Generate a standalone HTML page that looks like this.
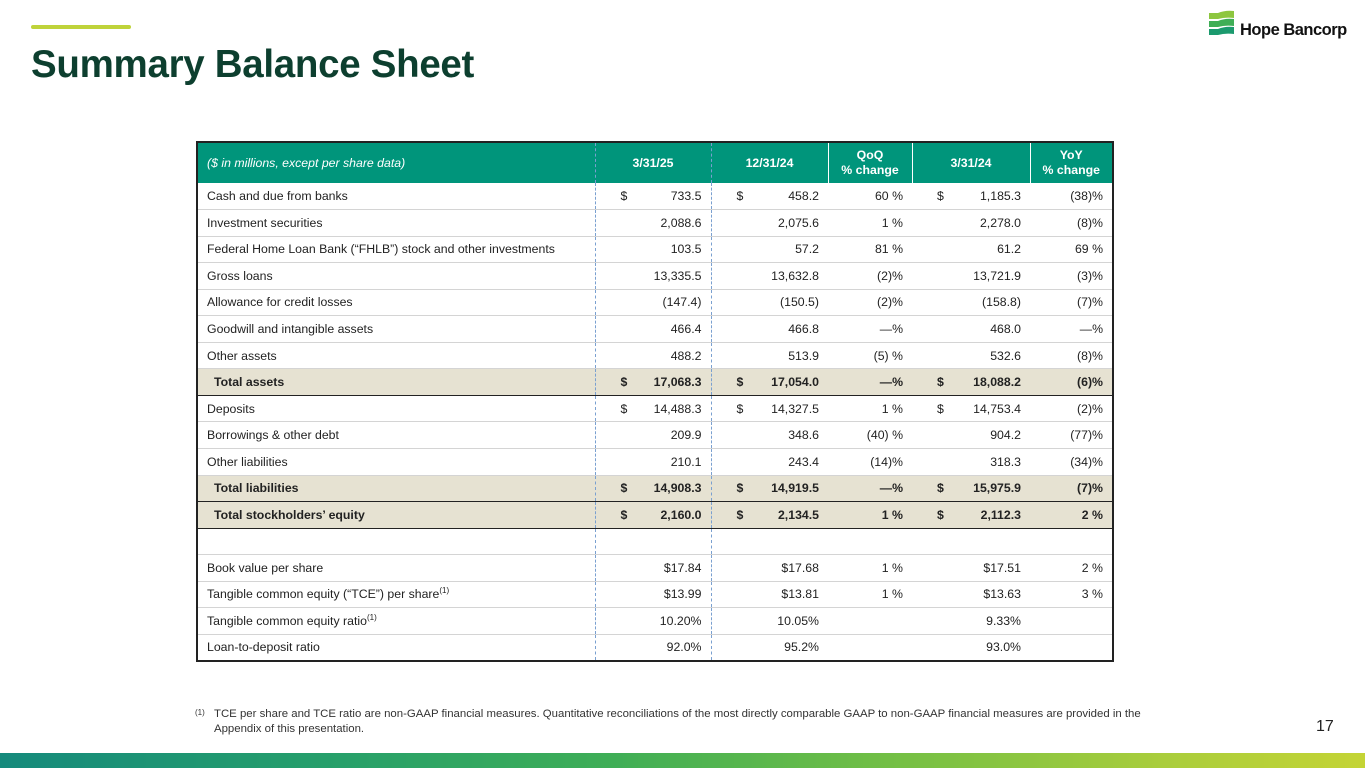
<!DOCTYPE html>
<html><head><meta charset="utf-8"><style>
*{margin:0;padding:0;box-sizing:border-box}
body{width:1365px;height:768px;background:#fff;position:relative;overflow:hidden;font-family:"Liberation Sans",sans-serif}
.bar{position:absolute;left:31px;top:25px;width:100px;height:4px;background:#bfd33a;border-radius:2px}
h1{position:absolute;left:31px;top:43px;font-size:38.5px;font-weight:bold;color:#0d3f2f;letter-spacing:-0.3px}
.logo{position:absolute;left:1207px;top:9px}
.logotxt{position:absolute;left:1240px;top:21px;font-size:16.5px;font-weight:bold;color:#111;letter-spacing:-0.5px}
table{position:absolute;left:196px;top:141px;border-collapse:collapse;font-size:12.3px;color:#222;border:2px solid #222;table-layout:fixed}
td,th{height:26.55px;padding:0 9px;white-space:nowrap;border-bottom:1px solid #d4d4d4}
th{height:41px;background:#00957b;color:#fff;font-weight:bold;text-align:center;line-height:15px;border-bottom:none}
th.l{text-align:left;font-style:italic;font-weight:normal}
th+th{border-left:1px solid #fff}
th.d1,th.d2{border-left:1px dashed #7aa0d0}
td.d{border-left:1px dashed #7aa0d0}
td.n{text-align:right}
td.n span{float:left;margin-left:16px}
tr.t td{background:#e6e2d2;font-weight:bold;border-top:1.5px solid #222;border-bottom:1.5px solid #222}
tr.t td:first-child{padding-left:16px}
sup{font-size:8px;vertical-align:top;line-height:8px}
.fn{position:absolute;left:195px;top:707px;font-size:11.4px;color:#333;line-height:15px}
.fn .s{position:absolute;left:0;top:-2px;font-size:8px}
.fn p{margin-left:19px}
.pg{position:absolute;left:1316px;top:718px;font-size:16px;color:#222}
.btm{position:absolute;left:0;top:753px;width:1365px;height:15px;background:linear-gradient(90deg,#158a7c 0%,#27a06a 25%,#3fae56 45%,#72bf45 65%,#a9cd3c 85%,#c4d435 100%)}
</style></head><body>
<div class="bar"></div>
<h1>Summary Balance Sheet</h1>
<svg class="logo" width="30" height="30" viewBox="0 0 30 30">
<path d="M2 4 L11 4 Q18 1 27 2 L27 9 Q18 8 11 10 L2 10Z" fill="#8dc63f"/>
<path d="M2 12 L11 12 Q18 9 27 10 L27 17 Q18 16 11 18 L2 18Z" fill="#3fae56"/>
<path d="M2 20 L11 20 Q18 17 27 18 L27 25 Q18 24 11 26 L2 26Z" fill="#1b9a6e"/>
</svg>
<div class="logotxt">Hope Bancorp</div>
<table>
<colgroup><col style="width:398px"><col style="width:116px"><col style="width:117px"><col style="width:84px"><col style="width:118px"><col style="width:83px"></colgroup>
<tr><th class="l">($ in millions, except per share data)</th><th class="d1">3/31/25</th><th class="d2">12/31/24</th><th>QoQ<br>% change</th><th>3/31/24</th><th>YoY<br>% change</th></tr>
<tr><td>Cash and due from banks</td><td class="n d"><span>$</span>733.5</td><td class="n d"><span>$</span>458.2</td><td class="n">60 %</td><td class="n"><span>$</span>1,185.3</td><td class="n">(38)%</td></tr>
<tr><td>Investment securities</td><td class="n d">2,088.6</td><td class="n d">2,075.6</td><td class="n">1 %</td><td class="n">2,278.0</td><td class="n">(8)%</td></tr>
<tr><td>Federal Home Loan Bank (“FHLB”) stock and other investments</td><td class="n d">103.5</td><td class="n d">57.2</td><td class="n">81 %</td><td class="n">61.2</td><td class="n">69 %</td></tr>
<tr><td>Gross loans</td><td class="n d">13,335.5</td><td class="n d">13,632.8</td><td class="n">(2)%</td><td class="n">13,721.9</td><td class="n">(3)%</td></tr>
<tr><td>Allowance for credit losses</td><td class="n d">(147.4)</td><td class="n d">(150.5)</td><td class="n">(2)%</td><td class="n">(158.8)</td><td class="n">(7)%</td></tr>
<tr><td>Goodwill and intangible assets</td><td class="n d">466.4</td><td class="n d">466.8</td><td class="n">—%</td><td class="n">468.0</td><td class="n">—%</td></tr>
<tr><td>Other assets</td><td class="n d">488.2</td><td class="n d">513.9</td><td class="n">(5) %</td><td class="n">532.6</td><td class="n">(8)%</td></tr>
<tr class="t"><td>Total assets</td><td class="n d"><span>$</span>17,068.3</td><td class="n d"><span>$</span>17,054.0</td><td class="n">—%</td><td class="n"><span>$</span>18,088.2</td><td class="n">(6)%</td></tr>
<tr><td>Deposits</td><td class="n d"><span>$</span>14,488.3</td><td class="n d"><span>$</span>14,327.5</td><td class="n">1 %</td><td class="n"><span>$</span>14,753.4</td><td class="n">(2)%</td></tr>
<tr><td>Borrowings &amp; other debt</td><td class="n d">209.9</td><td class="n d">348.6</td><td class="n">(40) %</td><td class="n">904.2</td><td class="n">(77)%</td></tr>
<tr><td>Other liabilities</td><td class="n d">210.1</td><td class="n d">243.4</td><td class="n">(14)%</td><td class="n">318.3</td><td class="n">(34)%</td></tr>
<tr class="t"><td>Total liabilities</td><td class="n d"><span>$</span>14,908.3</td><td class="n d"><span>$</span>14,919.5</td><td class="n">—%</td><td class="n"><span>$</span>15,975.9</td><td class="n">(7)%</td></tr>
<tr class="t"><td>Total stockholders’ equity</td><td class="n d"><span>$</span>2,160.0</td><td class="n d"><span>$</span>2,134.5</td><td class="n">1 %</td><td class="n"><span>$</span>2,112.3</td><td class="n">2 %</td></tr>
<tr><td></td><td class="d"></td><td class="d"></td><td></td><td></td><td></td></tr>
<tr><td>Book value per share</td><td class="n d">$17.84</td><td class="n d">$17.68</td><td class="n">1 %</td><td class="n">$17.51</td><td class="n">2 %</td></tr>
<tr><td>Tangible common equity (“TCE”) per share<sup>(1)</sup></td><td class="n d">$13.99</td><td class="n d">$13.81</td><td class="n">1 %</td><td class="n">$13.63</td><td class="n">3 %</td></tr>
<tr><td>Tangible common equity ratio<sup>(1)</sup></td><td class="n d">10.20%</td><td class="n d">10.05%</td><td class="n"></td><td class="n">9.33%</td><td class="n"></td></tr>
<tr><td>Loan-to-deposit ratio</td><td class="n d">92.0%</td><td class="n d">95.2%</td><td class="n"></td><td class="n">93.0%</td><td class="n"></td></tr>
</table>
<div class="fn"><span class="s">(1)</span><p>TCE per share and TCE ratio are non-GAAP financial measures. Quantitative reconciliations of the most directly comparable GAAP to non-GAAP financial measures are provided in the<br>Appendix of this presentation.</p></div>
<div class="pg">17</div>
<div class="btm"></div>
</body></html>
